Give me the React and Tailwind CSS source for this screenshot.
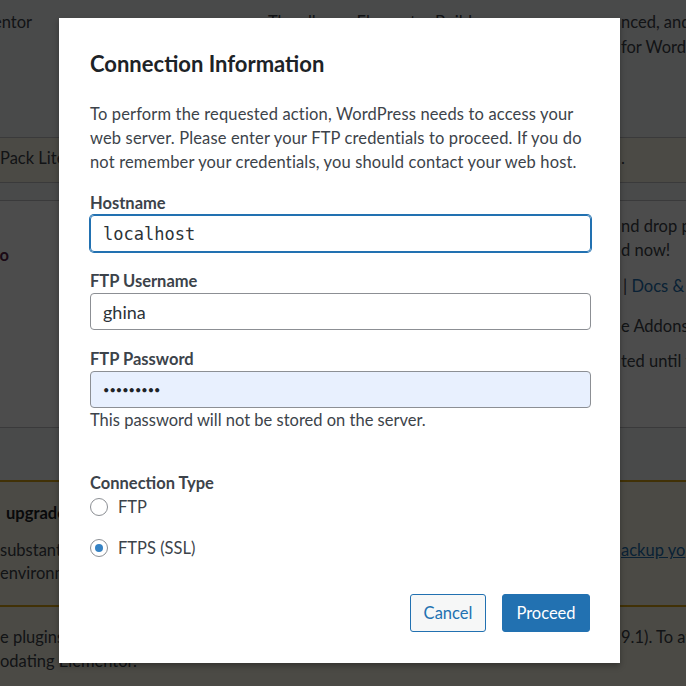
import { useState } from 'react';

function Field({ label, children, className = '' }) {
  return (
    <div className={`flex flex-col ${className}`}>
      <label className="font-bold leading-6 text-[#3c434a]">{label}</label>
      {children}
    </div>
  );
}

function Radio({ label, checked, onChange, className = '' }) {
  return (
    <label className={`flex h-6 items-center gap-[10px] cursor-pointer ${className}`} onClick={onChange}>
      <span className="flex h-[18px] w-[18px] items-center justify-center rounded-full border border-[#8c8f94] bg-white">
        {checked && <span className="h-2 w-2 rounded-full bg-[#3582c4]" />}
      </span>
      <span className="text-[#3c434a]">{label}</span>
    </label>
  );
}

function BackgroundPage() {
  return (
    <div className="flex flex-col text-[16.5px] text-[#3c434a]">
      {/* plugin row */}
      <div className="flex h-[137px] bg-[#f6f7f7]">
        <div className="w-[621px] shrink-0 pt-[10px] leading-[25px]">
          <div className="flex">
            <div className="flex w-[32px] justify-end whitespace-nowrap">Elementor</div>
            <div className="ml-[236px] whitespace-nowrap">The all-new Elementor Builder exp</div>
          </div>
        </div>
        <div className="pt-[10px] leading-[25px] whitespace-nowrap">
          <div>nced, and</div>
          <div>for Word</div>
        </div>
      </div>
      {/* update notice */}
      <div className="flex h-[46px] border-y border-[#c3c4c7] bg-[#fcf9e8] pt-[8px] leading-6">
        <div className="w-[621px] shrink-0 whitespace-nowrap">Pack Lite</div>
        <div className="whitespace-nowrap">.</div>
      </div>
      <div className="h-[17px] bg-[#f6f7f7]" />
      {/* addons row */}
      <div className="flex h-[227px] border-t border-[#c3c4c7] bg-white">
        <div className="w-[621px] shrink-0 pt-[42px] leading-6">
          <div className="flex w-[9px] justify-end whitespace-nowrap font-bold text-[#5b1f4a]">Go Pro</div>
        </div>
        <div className="flex flex-col whitespace-nowrap leading-6">
          <div className="mt-[13px]">nd drop p</div>
          <div>d now!</div>
          <div className="mt-[12px]">
            <span className="ml-[2px]">|</span> <span className="text-[#2271b1]">Docs &amp;</span>
          </div>
          <div className="mt-[16px]">e Addons</div>
          <div className="mt-[11px]">ted until t</div>
        </div>
      </div>
      <div className="h-[53px] border-t border-[#c3c4c7] bg-[#f6f7f7]" />
      {/* warning notice */}
      <div className="flex h-[125px] border-t-2 border-[#dba617] bg-[#fcf9e8]">
        <div className="flex w-[621px] shrink-0 flex-col whitespace-nowrap pt-[19px] leading-6">
          <div className="ml-[6px] font-bold text-[#1d2327]">upgrade</div>
          <div className="mt-[13px]">substantial</div>
          <div className="-mt-px">environment</div>
        </div>
        <div className="whitespace-nowrap pt-[56px] leading-6">
          <span className="text-[#2271b1] underline">ackup yo</span>
        </div>
      </div>
      <div className="flex h-[81px] border-t-2 border-[#dba617] bg-[#fcf9e8]">
        <div className="flex w-[621px] shrink-0 flex-col whitespace-nowrap pt-[18px] leading-6">
          <div>e plugins</div>
          <div>odating Elementor.</div>
        </div>
        <div className="whitespace-nowrap pt-[18px] leading-6">9.1). To av</div>
      </div>
    </div>
  );
}

export default function App() {
  const [connType, setConnType] = useState('ftps');
  const [host, setHost] = useState('localhost');
  const [user, setUser] = useState('ghina');

  return (
    <div className="relative h-[686px] w-full overflow-hidden font-['Lato',sans-serif]">
      <BackgroundPage />
      <div className="absolute inset-0 bg-black/70" />

      {/* dialog */}
      <div className="absolute left-[59px] top-[18px] w-[561px] bg-white pl-[31px] pr-[29px] pt-[32px] pb-[31px] text-[16.5px] shadow-[0_3px_6px_rgba(0,0,0,0.3)]">
        <h2 className="text-[22px] font-bold leading-[28px] text-[#1d2327]">Connection Information</h2>
        <p className="mt-6 whitespace-nowrap leading-6 tracking-[0.15px] text-[#3c434a]">
          To perform the requested action, WordPress needs to access your
          <br />
          web server. Please enter your FTP credentials to proceed. If you do
          <br />
          not remember your credentials, you should contact your web host.
        </p>

        <Field label="Hostname" className="mt-[17px]">
          <input
            value={host}
            onChange={e => setHost(e.target.value)}
            className="h-[37px] w-full rounded-[4px] border border-[#2271b1] px-3 font-['DejaVu_Sans_Mono',monospace] text-[17px] text-[#2c3338] shadow-[0_0_0_1px_#2271b1] outline-none"
          />
        </Field>

        <Field label="FTP Username" className="mt-[17px]">
          <input
            value={user}
            onChange={e => setUser(e.target.value)}
            className="h-[37px] w-full rounded-[4px] border border-[#8c8f94] px-3 text-[18px] text-[#2c3338] outline-none"
          />
        </Field>

        <Field label="FTP Password" className="mt-[17px]">
          <input
            type="password"
            defaultValue="123456789"
            className="h-[37px] w-full rounded-[4px] border border-[#8c8f94] bg-[#e8f0fe] px-3 text-[11px] text-[#1d2327] outline-none"
          />
        </Field>
        <p className="leading-6 text-[#3c434a]">This password will not be stored on the server.</p>

        <div className="mt-[39px] flex flex-col">
          <span className="font-bold leading-6 text-[#3c434a]">Connection Type</span>
          <Radio label="FTP" checked={connType === 'ftp'} onChange={() => setConnType('ftp')} />
          <Radio label="FTPS (SSL)" className="mt-[17px]" checked={connType === 'ftps'} onChange={() => setConnType('ftps')} />
        </div>

        <div className="mt-[34px] flex justify-end gap-4 pr-px">
          <button className="h-[38px] w-[76px] rounded-[3px] border border-[#2271b1] bg-[#f6f7f7] text-[#2271b1]">
            Cancel
          </button>
          <button className="h-[38px] w-[88px] rounded-[3px] border border-[#2271b1] bg-[#2271b1] text-white">
            Proceed
          </button>
        </div>
      </div>
    </div>
  );
}
